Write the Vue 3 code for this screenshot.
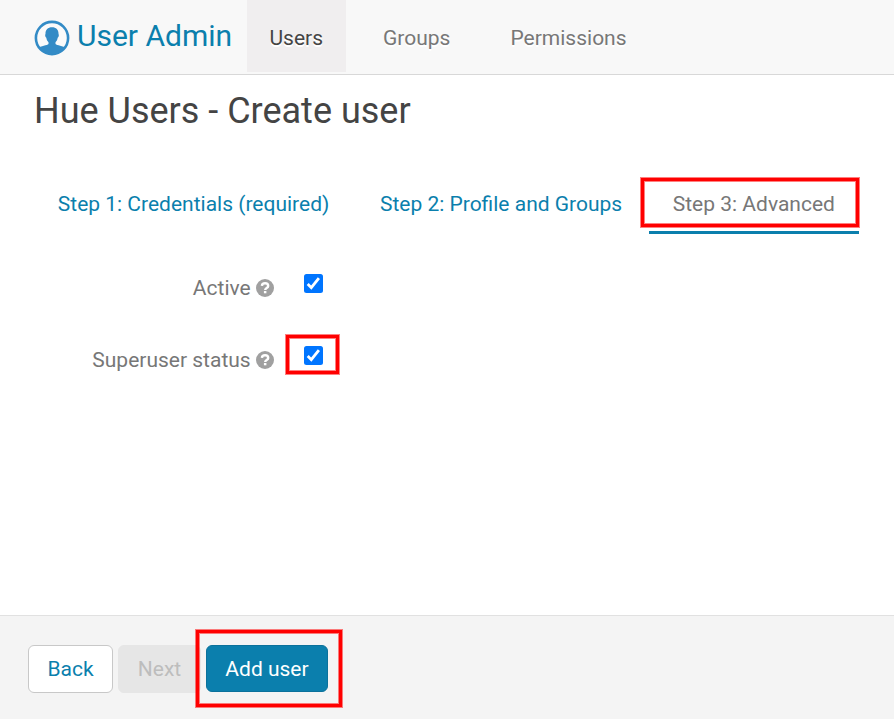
<script setup>
import { ref } from 'vue'

const tabs = ['Users', 'Groups', 'Permissions']
const steps = ['Step 1: Credentials (required)', 'Step 2: Profile and Groups', 'Step 3: Advanced']
const options = ref([
  { label: 'Active', checked: true, marked: false },
  { label: 'Superuser status', checked: true, marked: true },
])
</script>

<template>
  <div class="page">
    <header class="navbar">
      <a class="brand">
        <svg class="logo" viewBox="0 0 36 36">
          <defs><clipPath id="disc"><circle cx="18" cy="18" r="16.5" /></clipPath></defs>
          <circle cx="18" cy="18" r="16.1" fill="#fafafa" stroke="#338bc6" stroke-width="2.600" />
          <path
            clip-path="url(#disc)"
            fill="#338bc6"
            d="M18 7.200c-4.400 0-6.700 2.800-6.500 6.800-.7 1-.2 3 .8 3.800.4 2.200 1.100 3.400 2.200 4.400v1.800c-1.200 1.500-7.600 1.800-11 4.300V36h29v-7.700c-3.400-2.500-9.800-2.800-11-4.300v-1.800c1.100-1 1.800-2.200 2.200-4.400 1-.8 1.500-2.800.8-3.800.2-4-2.100-6.800-6.500-6.800z"
          />
        </svg>
        <span class="brand-name">User Admin</span>
      </a>
      <nav class="tabs">
        <a v-for="(tab, i) in tabs" :key="tab" class="tab" :class="{ active: i === 0 }">{{ tab }}</a>
      </nav>
    </header>

    <main class="content">
      <h1>Hue Users - Create user</h1>
      <div class="steps">
        <a v-for="(step, i) in steps" :key="step" class="step" :class="{ current: i === 2 }">
          {{ step }}<span v-if="i === 2" class="mark mark-step"></span>
        </a>
      </div>
      <div v-for="option in options" :key="option.label" class="row">
        <span class="label">{{ option.label }}</span>
        <svg class="help" viewBox="0 0 18 18">
          <circle cx="9" cy="9" r="9" fill="#a0a0a0" />
          <path d="M5.900 6.900C6 5.200 7.300 4.300 9.100 4.300c1.800 0 3.100 1 3.100 2.600 0 2.100-3 2.100-3 4" fill="none" stroke="#fff" stroke-width="2.400" />
          <rect x="7.900" y="12" width="2.500" height="2.300" fill="#fff" />
        </svg>
        <label class="check">
          <input v-model="option.checked" type="checkbox" />
          <svg viewBox="0 0 19 19">
            <rect width="19" height="19" rx="2.500" fill="#0075ff" />
            <path v-if="option.checked" d="M3.700 10l3.600 3.700 7.600-9.600" fill="none" stroke="#fff" stroke-width="2.800" />
          </svg>
          <span v-if="option.marked" class="mark mark-check"></span>
        </label>
      </div>
    </main>

    <footer class="actions">
      <button class="btn back">Back</button>
      <button class="btn next" disabled>Next</button>
      <button class="btn primary">Add user</button>
      <span class="mark mark-add"></span>
    </footer>
  </div>
</template>

<style>
body {
  margin: 0;
}
</style>

<style scoped>
.page {
  box-sizing: border-box;
  width: 894px;
  height: 719px;
  display: flex;
  flex-direction: column;
  overflow: hidden;
  background: #fff;
  color: #777;
  font: 400 21px/30px Roboto, sans-serif;
  white-space: nowrap;
}
.navbar {
  box-sizing: border-box;
  height: 75px;
  display: flex;
  background: #f8f8f8;
  border-bottom: 1px solid #d8d8d8;
}
.brand {
  box-sizing: border-box;
  width: 247px;
  padding: 20px 0 0 34px;
  display: flex;
  color: #0b7fad;
}
.logo {
  width: 36px;
  height: 36px;
}
.brand-name {
  margin-left: 7px;
  font-size: 30px;
  line-height: 32px;
}
.tabs {
  display: flex;
  gap: 15px;
}
.tab {
  height: 49px;
  padding: 23px 22.500px 0;
  text-shadow: 0 1.500px 0 #fff;
}
.tab.active {
  background: #f0eeef;
  color: #444;
}
.content {
  flex: 1;
}
h1 {
  margin: 16px 0 0 34px;
  font-size: 36px;
  line-height: 40px;
  font-weight: 400;
  color: #444;
}
.steps {
  display: flex;
  gap: 2.600px;
  margin: 43px 0 0 33.800px;
}
.step {
  position: relative;
  height: 42px;
  padding: 15px 24px 0;
  border-bottom: 3px solid transparent;
  color: #0b7fad;
}
.step.current {
  color: #777;
  border-bottom-color: #0b7fad;
}
.row {
  display: flex;
  height: 72px;
}
.steps + .row {
  margin-top: 38px;
}
.label {
  width: 250.700px;
  padding-top: 1px;
  text-align: right;
}
.help {
  width: 18px;
  height: 18px;
  margin: 6.500px 0 0 5.300px;
}
.check {
  position: relative;
  width: 19px;
  height: 19px;
  margin: 2px 0 0 30px;
}
.check svg {
  display: block;
  width: 19px;
  height: 19px;
}
.check input {
  position: absolute;
  opacity: 0;
  margin: 0;
}
.actions {
  position: relative;
  box-sizing: border-box;
  height: 104px;
  padding: 29px 0 0 28px;
  display: flex;
  background: #f4f4f4;
  border-top: 1px solid #e1e1e1;
}
.btn {
  box-sizing: border-box;
  height: 48px;
  padding: 0;
  border: 1px solid #c8c8c8;
  border-radius: 6px;
  font: inherit;
}
.back {
  width: 85px;
  background: #fff;
  color: #0b7fad;
}
.next {
  width: 83px;
  margin-left: 5px;
  background: #e6e6e6;
  border-color: #e6e6e6;
  color: #bdbdbd;
}
.primary {
  width: 122px;
  height: 47px;
  margin-left: 5px;
  background: #0b7fad;
  border-color: #0b719b;
  color: #fff;
}
.mark {
  position: absolute;
  box-sizing: border-box;
  border: 3px solid #f00;
  box-shadow: 0 0 0 1px rgba(255, 0, 0, 0.5), inset 0 0 0 1px rgba(255, 0, 0, 0.5);
  pointer-events: none;
}
.mark-step {
  left: -8px;
  top: 4px;
  width: 218px;
  height: 49px;
}
.mark-check {
  left: -18px;
  top: -11px;
  width: 53px;
  height: 39px;
}
.mark-add {
  left: 196px;
  top: 14px;
  width: 146px;
  height: 77px;
}
</style>
